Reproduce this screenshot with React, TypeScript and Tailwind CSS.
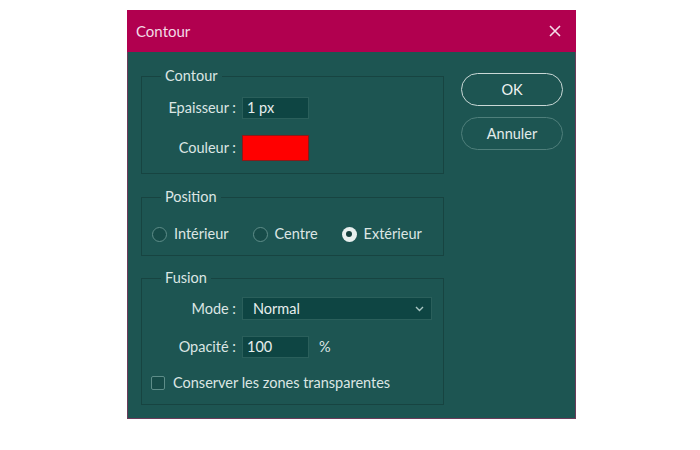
import React from 'react';

const font = { fontFamily: 'Lato, "Noto Sans", sans-serif' };

function Radio({ label, checked }: { label: string; checked?: boolean }) {
    return (
        <div className="flex items-center h-[20px]">
            {checked ? (
                <span className="flex items-center justify-center w-[15px] h-[15px] rounded-full bg-[#e8efee]">
                    <span className="w-[6px] h-[6px] rounded-full bg-[#163f3d]" />
                </span>
            ) : (
                <span className="w-[15px] h-[15px] rounded-full border border-[#5e8d89] bg-[#174c49]" />
            )}
            <span className="ml-[7px]">{label}</span>
        </div>
    );
}

function Field({ label, children }: { label: string; children: React.ReactNode }) {
    return (
        <div className="flex items-center">
            <div className="w-[100px] text-right pr-[6px]">{label}</div>
            {children}
        </div>
    );
}

function Group({ title, children, className }: { title: string; children: React.ReactNode; className?: string }) {
    return (
        <fieldset className={'border border-[#174441] ' + (className ?? '')}>
            <legend className="ml-[19px] px-[4px] leading-[20px]">{title}</legend>
            {children}
        </fieldset>
    );
}

export default function App() {
    return (
        <div className="w-[700px] h-[450px] bg-white pl-[127px] pt-[10px]" style={font}>
            <div className="w-[449px] h-[409px] flex flex-col bg-[#1d5552] border-x border-b border-[#6b3b5a] text-[14.5px] text-[#dce6e4]">
                <div className="flex items-center justify-between h-[42px] bg-[#b1004f] pl-[9px] pr-[14px] -mx-px">
                    <span className="text-[15px] text-[#f3dbe6]">Contour</span>
                    <svg width="12" height="12" viewBox="0 0 12 12" className="mr-[1px]">
                        <path d="M1 1L11 11M11 1L1 11" stroke="#f5dce8" strokeWidth="1.6" />
                    </svg>
                </div>
                <div className="flex pl-[13px]">
                    <div className="w-[303px] mt-[14px] flex flex-col">
                        <Group title="Contour" className="pt-[11px] pb-[12px]">
                            <Field label="Epaisseur :">
                                <div className="w-[67px] h-[22px] bg-[#0e4543] border border-[#2a5f5b] px-[4px] leading-[20px] text-[#e6eeed]">
                                    1 px
                                </div>
                            </Field>
                            <div className="h-[16px]" />
                            <Field label="Couleur :">
                                <div className="w-[67px] h-[26px] bg-[#ff0000] border border-[#8a1a1a]" />
                            </Field>
                        </Group>
                        <Group title="Position" className="mt-[13px] pt-[17px] pb-[11px]">
                            <div className="flex gap-[24px] pl-[10px]">
                                <Radio label="Intérieur" />
                                <Radio label="Centre" />
                                <Radio label="Extérieur" checked />
                            </div>
                        </Group>
                        <Group title="Fusion" className="mt-[12px] pt-[9px] pb-[11px]">
                            <Field label="Mode :">
                                <div className="w-[190px] h-[23px] bg-[#0e4543] border border-[#2a5f5b] pl-[10px] pr-[7px] flex items-center justify-between text-[#e6eeed]">
                                    <span>Normal</span>
                                    <svg width="9" height="6" viewBox="0 0 9 6">
                                        <path d="M1 1L4.5 4.5L8 1" stroke="#a9c6c3" strokeWidth="1.4" fill="none" />
                                    </svg>
                                </div>
                            </Field>
                            <div className="h-[16px]" />
                            <Field label="Opacité :">
                                <div className="w-[67px] h-[22px] bg-[#0e4543] border border-[#2a5f5b] px-[4px] leading-[20px] text-[#e6eeed]">
                                    100
                                </div>
                                <span className="ml-[10px]">%</span>
                            </Field>
                            <div className="flex items-center h-[20px] mt-[15px] pl-[9px]">
                                <span className="w-[14px] h-[14px] rounded-[2px] border border-[#5e8d89] bg-[#174c49]" />
                                <span className="ml-[8px]">Conserver les zones transparentes</span>
                            </div>
                        </Group>
                    </div>
                    <div className="ml-[17px] mt-[21px] flex flex-col gap-[11px]">
                        <button className="w-[102px] h-[33px] rounded-full border-[1.5px] border-[#c9d8d6] text-[#eef3f2]">
                            OK
                        </button>
                        <button className="w-[102px] h-[33px] rounded-full border border-[#4f7f7b] text-[#e3ebea]">
                            Annuler
                        </button>
                    </div>
                </div>
            </div>
        </div>
    );
}
